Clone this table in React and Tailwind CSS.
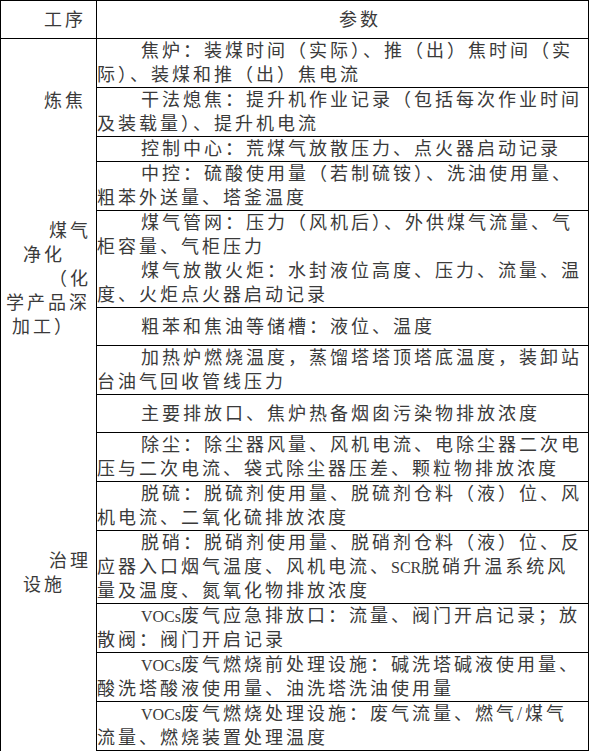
import React from "react";

const groups = [
  {
    label: [["炼焦", "pl-[43px]"]],
    cells: [
      { paras: [["焦炉：装煤时间（实际）、推（出）焦时间（实", "际）、装煤和推（出）焦电流"]] },
      { paras: [["干法熄焦：提升机作业记录（包括每次作业时间", "及装载量）、提升机电流"]] },
      { paras: [["控制中心：荒煤气放散压力、点火器启动记录"]] },
    ],
  },
  {
    label: [
      ["煤气", "pl-[48px]"],
      ["净化", "pl-[22px]"],
      ["（化", "pl-[48px]"],
      ["学产品深", "pl-[5px]"],
      ["加工）", "pl-[11px]"],
    ],
    cells: [
      { paras: [["中控：硫酸使用量（若制硫铵）、洗油使用量、", "粗苯外送量、塔釜温度"]] },
      {
        paras: [
          ["煤气管网：压力（风机后）、外供煤气流量、气", "柜容量、气柜压力"],
          ["煤气放散火炬：水封液位高度、压力、流量、温", "度、火炬点火器启动记录"],
        ],
      },
      { paras: [["粗苯和焦油等储槽：液位、温度"]], tall: true },
      { paras: [["加热炉燃烧温度，蒸馏塔塔顶塔底温度，装卸站", "台油气回收管线压力"]] },
    ],
  },
  {
    label: [
      ["治理", "pl-[48px]"],
      ["设施", "pl-[22px]"],
    ],
    cells: [
      { paras: [["主要排放口、焦炉热备烟囱污染物排放浓度"]], tall: true },
      { paras: [["除尘：除尘器风量、风机电流、电除尘器二次电", "压与二次电流、袋式除尘器压差、颗粒物排放浓度"]] },
      { paras: [["脱硫：脱硫剂使用量、脱硫剂仓料（液）位、风", "机电流、二氧化硫排放浓度"]] },
      {
        paras: [
          [
            "脱硝：脱硝剂使用量、脱硝剂仓料（液）位、反",
            "应器入口烟气温度、风机电流、SCR脱硝升温系统风",
            "量及温度、氮氧化物排放浓度",
          ],
        ],
      },
      { paras: [["VOCs废气应急排放口：流量、阀门开启记录；放", "散阀：阀门开启记录"]] },
      { paras: [["VOCs废气燃烧前处理设施：碱洗塔碱液使用量、", "酸洗塔酸液使用量、油洗塔洗油使用量"]] },
      { paras: [["VOCs废气燃烧处理设施：废气流量、燃气/煤气", "流量、燃烧装置处理温度"]] },
    ],
  },
];

function Rich({ text }) {
  const parts = text.split(/([A-Za-z]+)/);
  return parts.map((p, i) =>
    /^[A-Za-z]+$/.test(p) ? (
      <span key={i} className="text-[16px] leading-none tracking-normal">
        {p}
      </span>
    ) : (
      <React.Fragment key={i}>{p}</React.Fragment>
    )
  );
}

function Para({ lines }) {
  return (
    <div>
      {lines.map((l, i) => (
        <div key={i} className={"h-6 whitespace-nowrap " + (i === 0 ? "pl-[44px]" : "pl-0")}>
          <Rich text={l} />
        </div>
      ))}
    </div>
  );
}

export default function App() {
  return (
    <div className="bg-white w-[591px] h-[752px]">
      <div className="w-[589px] border-l border-t border-r border-black text-[18px] leading-6 tracking-[3px] text-[#3a3a3a] font-['Liberation_Serif','Noto_Sans_CJK_SC',serif]">
        <div className="flex h-[38px] border-b border-black">
          <div className="w-[96px] border-r border-black flex items-center pl-[43px]">工序</div>
          <div className="flex-1 flex items-center pl-[242px]">参数</div>
        </div>
        {groups.map((g, gi) => (
          <div key={gi} className="flex">
            <div className="w-[96px] shrink-0 border-r border-black flex flex-col justify-center">
              {g.label.map(([t, pl], li) => (
                <div key={li} className={"h-6 whitespace-nowrap " + pl}>
                  {t}
                </div>
              ))}
            </div>
            <div className="flex-1 flex flex-col">
              {g.cells.map((c, ci) => (
                <div
                  key={ci}
                  className={
                    "border-b border-black " + (c.tall ? "h-[38px] flex flex-col justify-center" : "")
                  }
                >
                  {c.paras.map((p, pi) => (
                    <Para key={pi} lines={p} />
                  ))}
                </div>
              ))}
            </div>
          </div>
        ))}
      </div>
    </div>
  );
}
